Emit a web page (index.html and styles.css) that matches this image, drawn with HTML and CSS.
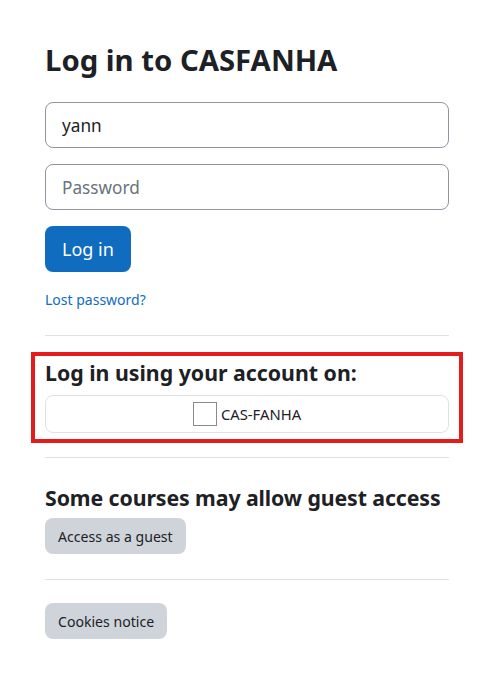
FILE: index.html
```html
<!DOCTYPE html>
<html lang="en">
<head>
<meta charset="utf-8">
<title>Log in to CASFANHA</title>
<link rel="stylesheet" href="styles.css">
</head>
<body>
<main class="login">
  <h1 class="login-title">Log in to CASFANHA</h1>
  <form class="login-form">
    <input class="field" type="text" value="yann" aria-label="Username">
    <input class="field" type="password" placeholder="Password" aria-label="Password">
    <button class="btn btn-primary" type="button">Log in</button>
  </form>
  <a class="lost" href="#">Lost password?</a>
  <hr class="divider first">
  <section class="identity">
    <h2 class="subhead">Log in using your account on:</h2>
    <button class="idp" type="button"><span class="idp-icon"></span><span>CAS-FANHA</span></button>
  </section>
  <hr class="divider second">
  <h2 class="subhead guest-head">Some courses may allow guest access</h2>
  <button class="btn btn-secondary" type="button">Access as a guest</button>
  <hr class="divider third">
  <button class="btn btn-secondary" type="button">Cookies notice</button>
</main>
</body>
</html>
```
FILE: styles.css
```css
* { box-sizing: border-box; }
html, body {
  margin: 0;
  background: #fff;
}
body {
  font-family: "Noto Sans", "Open Sans", sans-serif;
  color: #1d2125;
  font-size: 15px;
}
.login {
  width: 404px;
  margin-left: 45px;
  padding-top: 42px;
  display: flex;
  flex-direction: column;
  align-items: flex-start;
}
.login-title {
  margin: 0 0 24px;
  font-size: 29.3px;
  line-height: 36px;
  font-weight: 700;
}
.login-form {
  width: 100%;
  display: flex;
  flex-direction: column;
  align-items: flex-start;
  gap: 16px;
}
.field {
  width: 100%;
  height: 46px;
  border: 1px solid #8f959e;
  border-radius: 8px;
  padding: 0 16px;
  font: inherit;
  font-size: 17.2px;
  color: #1d2125;
}
.field::placeholder { color: #6a737b; }
.btn {
  font: inherit;
  border: 1px solid transparent;
  border-radius: 8px;
  cursor: pointer;
}
.btn-primary {
  height: 46px;
  padding: 0 16px;
  background: #0f6cbf;
  color: #fff;
  font-size: 18px;
}
.btn-secondary {
  height: 36px;
  padding: 0 12px;
  background: #ced4da;
  color: #1d2125;
  font-size: 14.1px;
}
.lost {
  margin-top: 18px;
  font-size: 14px;
  line-height: 20px;
  color: #0f6cbf;
  text-decoration: none;
}
.divider {
  width: 100%;
  margin: 0;
  border: 0;
  border-top: 1px solid #dee2e6;
}
.divider.first { margin-top: 25px; margin-bottom: 16px; }
.divider.second { margin-top: 14px; margin-bottom: 26px; }
.divider.third { margin-top: 25px; margin-bottom: 23px; }
.identity {
  width: calc(100% + 28px);
  margin-left: -14px;
  border: 4px solid #e41c1c;
  padding: 3px 10px 6px;
}
.subhead {
  margin: 0 0 9px;
  font-size: 21.3px;
  line-height: 27px;
  font-weight: 700;
  white-space: nowrap;
}
.guest-head {
  margin-bottom: 7px;
  letter-spacing: -0.1px;
}
.idp {
  width: 100%;
  height: 38px;
  display: flex;
  align-items: center;
  justify-content: center;
  gap: 4px;
  background: #fff;
  border: 1px solid #dee2e6;
  border-radius: 8px;
  font: inherit;
  font-size: 14.8px;
  color: #1d2125;
}
.idp-icon {
  width: 24px;
  height: 24px;
  border: 1px solid #8a8a8a;
}
```
